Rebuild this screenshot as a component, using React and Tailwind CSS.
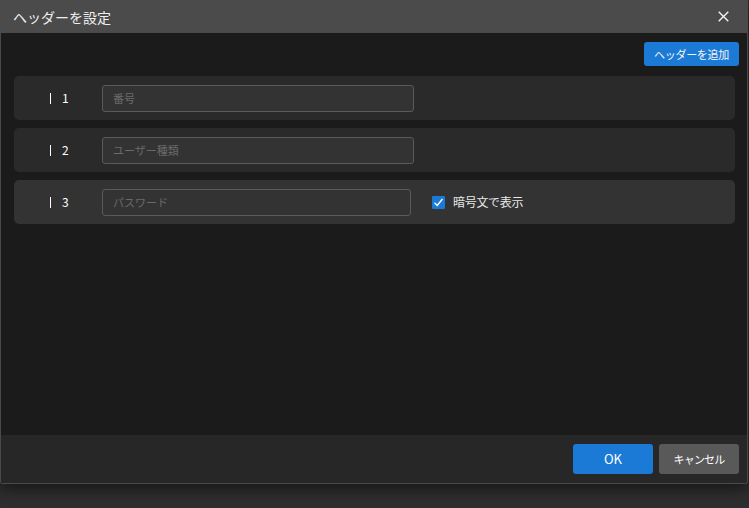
import React from 'react';

const rows = [
  { n: '1', placeholder: '番号', inputW: 'w-[312px]' },
  { n: '2', placeholder: 'ユーザー種類', inputW: 'w-[312px]' },
  { n: '3', placeholder: 'パスワード', inputW: 'w-[309px]', secret: true },
];

const font = { fontFamily: '"Noto Sans CJK JP", "Noto Sans", sans-serif' };

const HeaderDialog = () => {
  return (
    <div className="w-[749px] h-[508px] bg-[#2e2e2e] overflow-hidden" style={font}>
      <div className="w-[748px] h-[484px] flex flex-col bg-[#1b1b1b] border-x border-b border-[#4a4a4a] rounded-b-[3px] shadow-[0_6px_14px_rgba(0,0,0,0.45)]">
        {/* Title bar */}
        <div className="h-[33px] bg-[#4b4b4b] flex items-center justify-between pl-3 pr-[18px] shrink-0">
          <span className="text-[14px] text-[#f0f0f0] leading-none">ヘッダーを設定</span>
          <svg width="11" height="11" viewBox="0 0 11 11" className="text-[#f2f2f2]">
            <path d="M0.7 0.7L10.3 10.3M10.3 0.7L0.7 10.3" stroke="currentColor" strokeWidth="1.4" />
          </svg>
        </div>

        {/* Body */}
        <div className="flex-1 pl-[13px] pr-[12px]">
          <div className="flex justify-end pt-[9px]">
            <button className="h-[24px] w-[95px] -mr-[4px] bg-[#1c7ad7] rounded-[3px] text-[11px] tracking-[-0.3px] text-[#f4f4f4]">
              ヘッダーを追加
            </button>
          </div>
          <div className="flex flex-col gap-2 mt-[10px]">
            {rows.map((r) => (
              <div
                key={r.n}
                className={`h-[44px] rounded-[5px] flex items-center ${r.secret ? 'bg-[#333333]' : 'bg-[#2a2a2a]'}`}
              >
                <div className="w-[88px] flex items-center pl-[36px] text-[12px] text-white">
                  <span className="w-px h-[11px] bg-white mr-[11px]" />
                  <span>{r.n}</span>
                </div>
                <div
                  className={`${r.inputW} h-[27px] rounded-[3px] border border-[#5a5a5a] bg-[#333333] flex items-center px-[10px] text-[11px] text-[#6a6a6a]`}
                >
                  {r.placeholder}
                </div>
                {r.secret && (
                  <label className="flex items-center ml-[21px] gap-[8px] text-[12px] tracking-[-0.3px] text-[#e8e8e8]">
                    <span className="w-[13px] h-[13px] bg-[#1c7ad7] rounded-[1px] flex items-center justify-center">
                      <svg width="11" height="11" viewBox="0 0 11 11">
                        <path d="M1.5 5.8L4.2 8.5L9.5 2" fill="none" stroke="white" strokeWidth="1.4" />
                      </svg>
                    </span>
                    暗号文で表示
                  </label>
                )}
              </div>
            ))}
          </div>
        </div>

        {/* Footer */}
        <div className="h-[48px] bg-[#272727] flex items-center justify-end gap-[6px] pr-[8px] shrink-0 rounded-b-[3px]">
          <button className="w-[80px] h-[30px] bg-[#1c7ad7] rounded-[3px] text-[13px] text-white">OK</button>
          <button className="w-[80px] h-[30px] bg-[#595959] rounded-[3px] text-[11px] tracking-[-0.8px] text-white">キャンセル</button>
        </div>
      </div>
    </div>
  );
};

export default function App() {
  return <HeaderDialog />;
}
